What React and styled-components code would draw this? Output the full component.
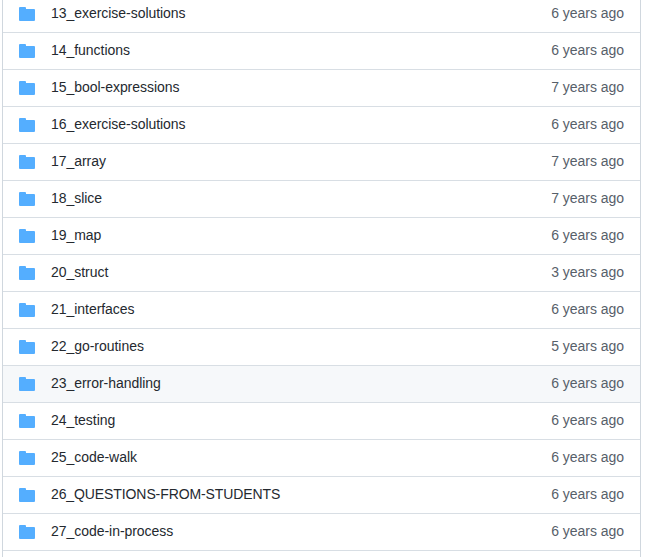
import React from "react";
import styled, { createGlobalStyle } from "styled-components";

const Global = createGlobalStyle`
  * { box-sizing: border-box; }
  body {
    margin: 0;
    background: #ffffff;
    overflow: hidden;
    font-family: "Liberation Sans", Arial, sans-serif;
    font-size: 14px;
    line-height: 20px;
    color: #24292f;
  }
`;

const Viewport = styled.main`
  height: 557px;
  overflow: hidden;
  padding: 0 5px 0 2px;
`;

const FileList = styled.div`
  height: 570px;
  border: solid #d0d7de;
  border-width: 0 1px;
`;

const Row = styled.div`
  display: flex;
  align-items: center;
  height: 37px;
  padding: 0 16px;
  border-top: 1px solid #d8dee4;
  background: ${(p) => (p.$active ? "#f6f8fa" : "#ffffff")};

  &:first-child {
    height: 32px;
    padding-bottom: 4px;
    border-top: 0;
  }
`;

const FolderIcon = styled.svg`
  width: 16px;
  height: 16px;
  margin-right: 16px;
  fill: #54aeff;
`;

const Name = styled.span`
  flex: 1;
  padding-bottom: 2px;
  letter-spacing: ${(p) => (p.$tight ? "-0.1px" : "-0.04px")};
`;

const Age = styled.span`
  padding-bottom: 2px;
  color: #57606a;
  letter-spacing: -0.04px;
`;

const rows = [
  ["13_exercise-solutions", 6],
  ["14_functions", 6],
  ["15_bool-expressions", 7],
  ["16_exercise-solutions", 6],
  ["17_array", 7],
  ["18_slice", 7],
  ["19_map", 6],
  ["20_struct", 3],
  ["21_interfaces", 6],
  ["22_go-routines", 5],
  ["23_error-handling", 6, true],
  ["24_testing", 6],
  ["25_code-walk", 6],
  ["26_QUESTIONS-FROM-STUDENTS", 6],
  ["27_code-in-process", 6],
];

export default function App() {
  return (
    <Viewport>
      <Global />
      <FileList>
        {rows.map(([name, years, active]) => (
          <Row key={name} $active={active}>
            <FolderIcon viewBox="0 0 16 16" aria-hidden="true">
              <path d="M1 1A1 1 0 000 2v12a1 1 0 001 1h14a1 1 0 001-1V4a1 1 0 00-1-1H7V2a1 1 0 00-1-1H1z" />
            </FolderIcon>
            <Name $tight={name === name.toUpperCase()}>{name}</Name>
            <Age>{years} years ago</Age>
          </Row>
        ))}
        <Row />
      </FileList>
    </Viewport>
  );
}
